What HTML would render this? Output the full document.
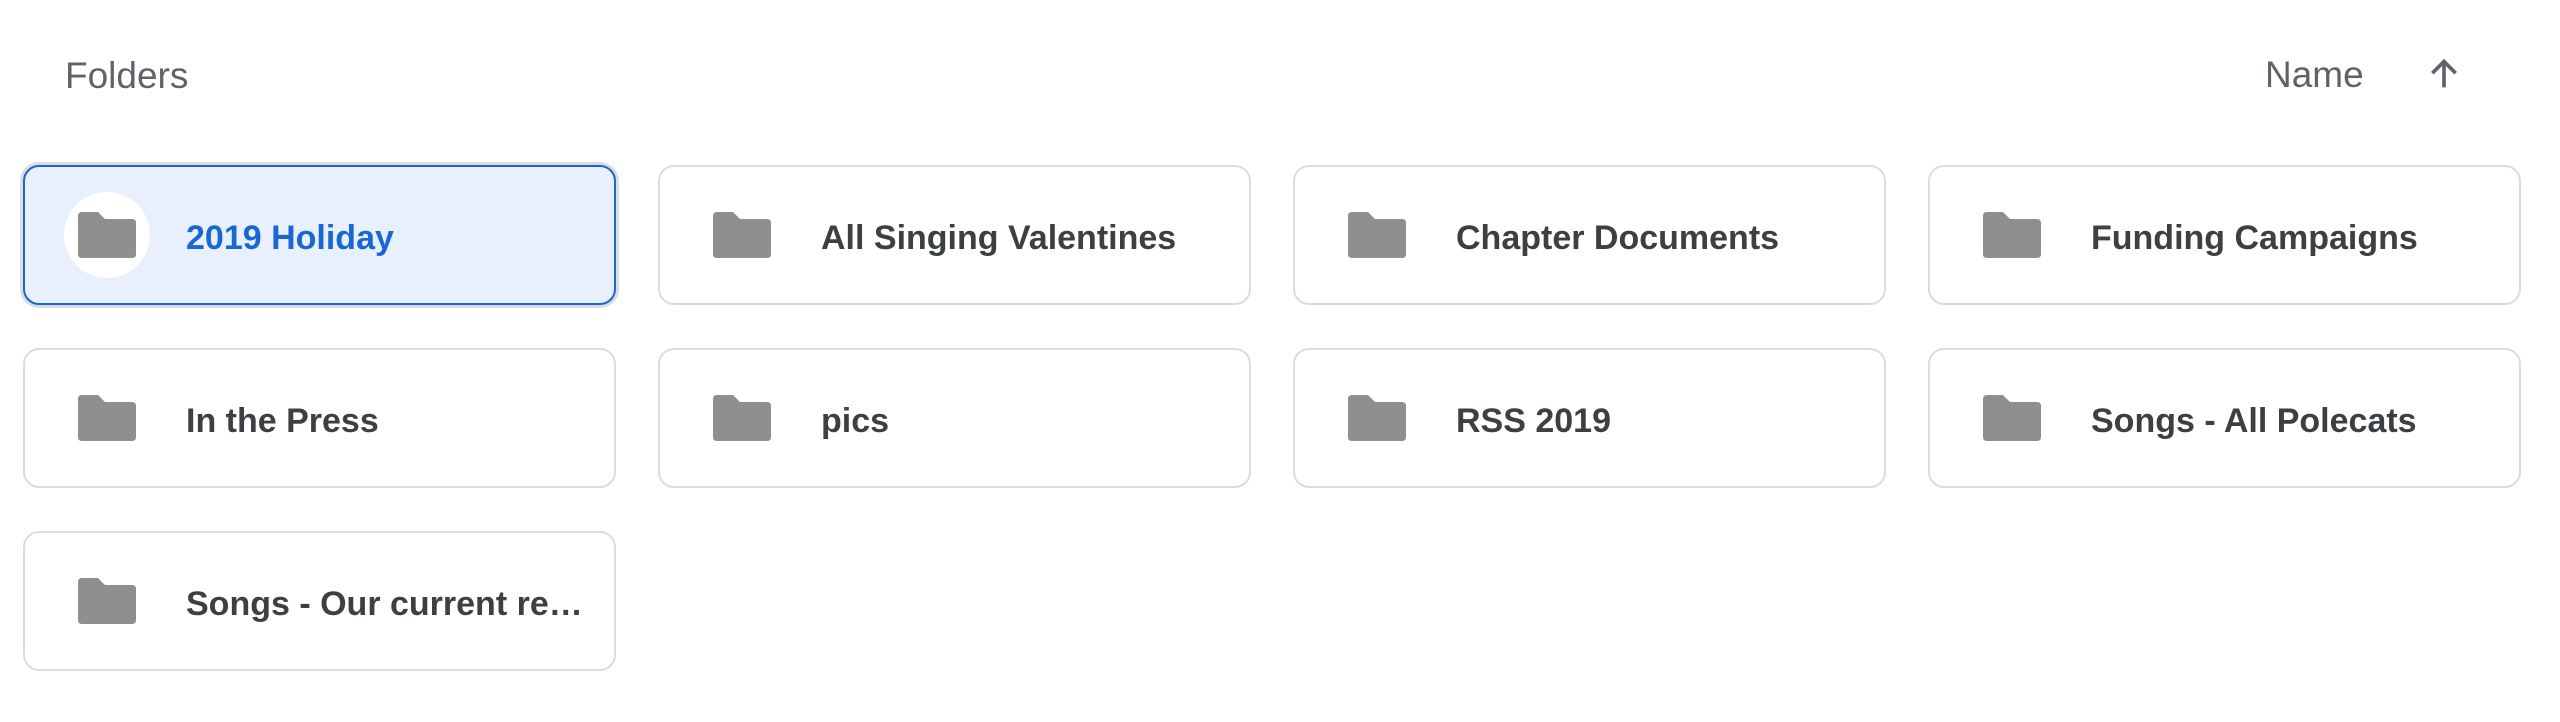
<!DOCTYPE html>
<html><head><style>
body{margin:0;width:2560px;height:722px;background:#fff;font-family:"Liberation Sans",Arial,sans-serif;position:relative;overflow:hidden}
.h{position:absolute;color:#5f6368;font-size:37px}
.c{position:absolute;width:589px;height:136px;border:2px solid #dadce0;border-radius:16px;box-sizing:content-box}
.c svg{position:absolute;left:53px;top:45px}
.c span{position:absolute;left:161px;top:3px;line-height:136px;font-size:34px;font-weight:bold;color:#3c4043;white-space:nowrap;overflow:hidden;text-overflow:ellipsis;max-width:400px}
.sel{background:#e8f0fe;border-color:#1967d2;box-shadow:0 0 0 3px #dadce0}
.sel span{color:#1967d2}
.circ{position:absolute;left:39px;top:25px;width:86px;height:86px;border-radius:50%;background:#fff}
</style></head><body>
<div class="h" style="left:65px;top:55px">Folders</div>
<div class="h" style="left:2265px;top:54px">Name</div>
<svg style="position:absolute;left:2424px;top:54px" width="40" height="40" viewBox="0 0 24 24"><path d="M12 20V5M5 11.5L12 4.5L19 11.5" stroke="#5f6368" stroke-width="2.2" fill="none"/></svg>

<div class="c sel" style="left:23px;top:165px"><div class="circ"></div><svg width="58" height="46" viewBox="0 0 58 46"><path d="M4 0H20L27 7H54Q58 7 58 11V42Q58 46 54 46H4Q0 46 0 42V4Q0 0 4 0Z" fill="#8f8f8f"/></svg><span>2019 Holiday</span></div>
<div class="c" style="left:658px;top:165px"><svg width="58" height="46" viewBox="0 0 58 46"><path d="M4 0H20L27 7H54Q58 7 58 11V42Q58 46 54 46H4Q0 46 0 42V4Q0 0 4 0Z" fill="#8f8f8f"/></svg><span>All Singing Valentines</span></div>
<div class="c" style="left:1293px;top:165px"><svg width="58" height="46" viewBox="0 0 58 46"><path d="M4 0H20L27 7H54Q58 7 58 11V42Q58 46 54 46H4Q0 46 0 42V4Q0 0 4 0Z" fill="#8f8f8f"/></svg><span>Chapter Documents</span></div>
<div class="c" style="left:1928px;top:165px"><svg width="58" height="46" viewBox="0 0 58 46"><path d="M4 0H20L27 7H54Q58 7 58 11V42Q58 46 54 46H4Q0 46 0 42V4Q0 0 4 0Z" fill="#8f8f8f"/></svg><span>Funding Campaigns</span></div>

<div class="c" style="left:23px;top:348px"><svg width="58" height="46" viewBox="0 0 58 46"><path d="M4 0H20L27 7H54Q58 7 58 11V42Q58 46 54 46H4Q0 46 0 42V4Q0 0 4 0Z" fill="#8f8f8f"/></svg><span>In the Press</span></div>
<div class="c" style="left:658px;top:348px"><svg width="58" height="46" viewBox="0 0 58 46"><path d="M4 0H20L27 7H54Q58 7 58 11V42Q58 46 54 46H4Q0 46 0 42V4Q0 0 4 0Z" fill="#8f8f8f"/></svg><span>pics</span></div>
<div class="c" style="left:1293px;top:348px"><svg width="58" height="46" viewBox="0 0 58 46"><path d="M4 0H20L27 7H54Q58 7 58 11V42Q58 46 54 46H4Q0 46 0 42V4Q0 0 4 0Z" fill="#8f8f8f"/></svg><span>RSS 2019</span></div>
<div class="c" style="left:1928px;top:348px"><svg width="58" height="46" viewBox="0 0 58 46"><path d="M4 0H20L27 7H54Q58 7 58 11V42Q58 46 54 46H4Q0 46 0 42V4Q0 0 4 0Z" fill="#8f8f8f"/></svg><span>Songs - All Polecats</span></div>

<div class="c" style="left:23px;top:531px"><svg width="58" height="46" viewBox="0 0 58 46"><path d="M4 0H20L27 7H54Q58 7 58 11V42Q58 46 54 46H4Q0 46 0 42V4Q0 0 4 0Z" fill="#8f8f8f"/></svg><span>Songs - Our current re…</span></div>
</body></html>
